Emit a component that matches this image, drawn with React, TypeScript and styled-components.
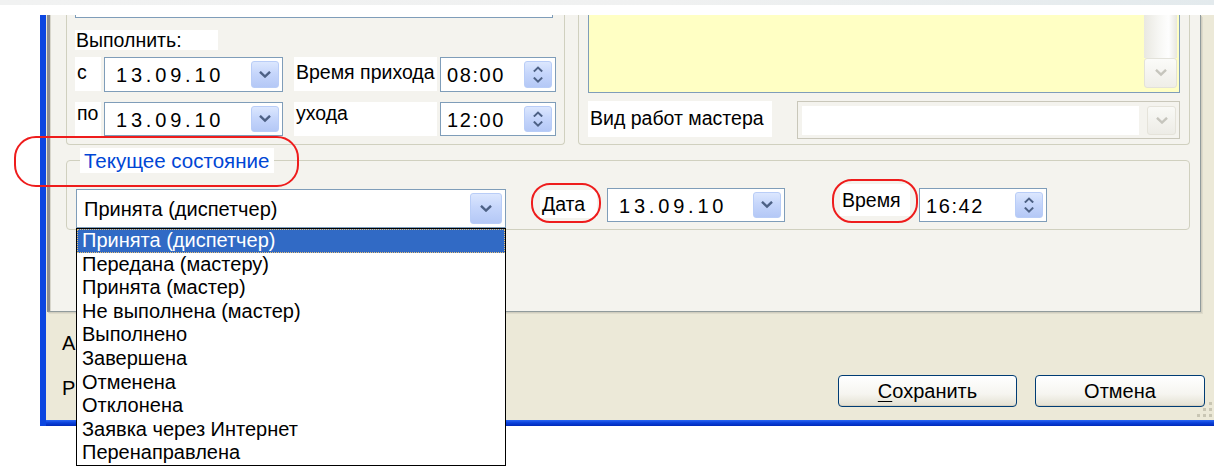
import React from "react";
import styled, { createGlobalStyle } from "styled-components";

const GlobalStyle = createGlobalStyle`
  html, body {
    margin: 0;
    padding: 0;
    background: #fff;
  }
`;

const xp = {
  beige: "#ece9d8",
  panel: "#f4f3ee",
  groupLine: "#d0d0bf",
  field: "#7f9db9",
  caption: "#0046d5",
  memo: "#ffffc4",
  selection: "#316ac5",
  mark: "#ee1c1c",
};

const statuses = [
  "Принята (диспетчер)",
  "Передана (мастеру)",
  "Принята (мастер)",
  "Не выполнена (мастер)",
  "Выполнено",
  "Завершена",
  "Отменена",
  "Отклонена",
  "Заявка через Интернет",
  "Перенаправлена",
];

type TextKind = "date" | "time" | "text";

const spacing: Record<TextKind, number> = { date: 3.8, time: 1.6, text: 0 };

const Chevron: React.FC<{ dir?: "up" | "down"; color: string; size?: number }> = ({
  dir = "down",
  color,
  size = 12,
}) => (
  <svg width={size} height={size * 0.62} viewBox="0 0 12 7.5">
    <path
      d={dir === "down" ? "M1.8 1.6 L6 5.6 L10.2 1.6" : "M1.8 5.9 L6 1.9 L10.2 5.9"}
      fill="none"
      stroke={color}
      strokeWidth="2.4"
      strokeLinecap="square"
    />
  </svg>
);

const SpinArrows: React.FC = () => (
  <SpinButton>
    <Chevron dir="up" color="#4d6185" size={10} />
    <Chevron color="#4d6185" size={10} />
  </SpinButton>
);

const App: React.FC = () => {
  return (
    <>
      <GlobalStyle />
      <Page>
        <TopStrip />
        <Window>
          <Panel>
            <TopRow>
              <LeftGroup>
                <InputStub />
                <Caption>Выполнить:</Caption>
                <FieldRow $top={7}>
                  <Label $w={26} $h={34} $pad={5}>с</Label>
                  <Field $w={179} $h={35} $left={3}>
                    <FieldText $pad={8} $kind="date">13.09.10</FieldText>
                    <ArrowButton><Chevron color="#4d6185" /></ArrowButton>
                  </Field>
                  <Label $w={143} $h={34} $pad={5} $left={11}>Время прихода</Label>
                  <Field $w={116} $h={35} $left={3}>
                    <FieldText $pad={3} $kind="time">08:00</FieldText>
                    <SpinArrows />
                  </Field>
                </FieldRow>
                <FieldRow $top={10}>
                  <Label $w={26} $h={34} $pad={1}>по</Label>
                  <Field $w={179} $h={34} $left={3}>
                    <FieldText $pad={8} $kind="date">13.09.10</FieldText>
                    <ArrowButton><Chevron color="#4d6185" /></ArrowButton>
                  </Field>
                  <Label $w={143} $h={34} $pad={1} $left={11}>ухода</Label>
                  <Field $w={116} $h={34} $left={3}>
                    <FieldText $pad={3} $kind="time">12:00</FieldText>
                    <SpinArrows />
                  </Field>
                </FieldRow>
              </LeftGroup>

              <RightGroup>
                <Memo>
                  <MemoScroll>
                    <ScrollTrack />
                    <ScrollArrow><Chevron color="#c6c5bd" /></ScrollArrow>
                  </MemoScroll>
                </Memo>
                <FieldRow $top={8}>
                  <Label $w={184} $h={36} $pad={7}>Вид работ мастера</Label>
                  <DisabledCombo>
                    <DisabledText />
                    <DisabledButton><Chevron color="#c6c5bd" /></DisabledButton>
                  </DisabledCombo>
                </FieldRow>
              </RightGroup>
            </TopRow>

            <StatusGroup>
              <StatusLegend>Текущее состояние</StatusLegend>
              <StatusRow>
                <ComboWrap>
                  <Field $w={430} $h={39} $top={5}>
                    <FieldText $pad={4} $kind="text">Принята (диспетчер)</FieldText>
                    <ArrowButton $wide><Chevron color="#4d6185" /></ArrowButton>
                  </Field>
                  <DropList>
                    {statuses.map((s, i) => (
                      <DropItem key={s} $selected={i === 0}>{s}</DropItem>
                    ))}
                  </DropList>
                </ComboWrap>
                <Label $w={57} $h={28} $pad={4} $left={34} $top={6}>Дата</Label>
                <Field $w={178} $h={34} $left={10} $top={4}>
                  <FieldText $pad={8} $kind="date">13.09.10</FieldText>
                  <ArrowButton><Chevron color="#4d6185" /></ArrowButton>
                </Field>
                <Label $w={70} $h={32} $pad={6} $left={55}>Время</Label>
                <Field $w={128} $h={34} $left={9} $top={4}>
                  <FieldText $pad={3} $kind="time">16:42</FieldText>
                  <SpinArrows />
                </Field>
              </StatusRow>
            </StatusGroup>
          </Panel>

          <Footer>
            <SideLabels>
              <SideLabel>А</SideLabel>
              <SideLabel>Р</SideLabel>
            </SideLabels>
            <Buttons>
              <DialogButton $w={179}>
                <u>С</u>охранить
              </DialogButton>
              <DialogButton $w={170}>Отмена</DialogButton>
            </Buttons>
            <Grip width="18" height="18" viewBox="0 0 18 18">
              {[
                [14, 2],
                [14, 8],
                [8, 8],
                [14, 14],
                [8, 14],
                [2, 14],
              ].map(([x, y]) => (
                <rect key={`${x}-${y}`} x={x} y={y} width="3" height="3" fill="#c9c6b4" />
              ))}
            </Grip>
          </Footer>
          <FrameBottom />
        </Window>

        {/* red marks drawn over the form */}
        <Mark style={{ left: 14, top: 136, width: 285, height: 51 }} $r={22} />
        <Mark style={{ left: 531, top: 183, width: 70, height: 40 }} $r={19} />
        <Mark style={{ left: 832, top: 179, width: 86, height: 44 }} $r={20} />
      </Page>
    </>
  );
};

const Page = styled.div`
  position: relative;
  width: 1214px;
  height: 469px;
  overflow: hidden;
  background: #fff;
  font-family: "Liberation Sans", Arial, sans-serif;
  color: #000;
`;

const TopStrip = styled.div`
  height: 5px;
  background: linear-gradient(90deg, #f1f2f2 0%, #f0f1f1 55%, #e3eaed 100%);
`;

const Window = styled.div`
  box-sizing: border-box;
  width: 1174px;
  height: 411px;
  margin: 10px 0 0 40px;
  border-left: 6px solid #0c46e0;
  background: ${xp.beige};
  display: flex;
  flex-direction: column;
`;

const Panel = styled.div`
  box-sizing: border-box;
  flex-shrink: 0;
  width: 1154px;
  height: 297px;
  margin-left: 1px;
  padding: 0 10px 0 16px;
  background: ${xp.panel};
  border-left: 3px solid #8e8e8e;
  border-right: 1px solid #919b9c;
  border-bottom: 1px solid #919b9c;
  box-shadow: inset 1px 0 0 #d8d6cc, 1px 1px 0 #d0cdbf, 2px 2px 0 #dedbcb;
`;

const TopRow = styled.div`
  display: flex;
  gap: 13px;
  height: 130px;
`;

const GroupBox = styled.div`
  box-sizing: border-box;
  height: 130px;
  border: 1px solid ${xp.groupLine};
  border-top: none;
  border-radius: 0 0 4px 4px;
`;

const LeftGroup = styled(GroupBox)`
  width: 499px;
  padding: 0 8px;
`;

const RightGroup = styled(GroupBox)`
  width: 612px;
  padding: 0 9px;
`;

const InputStub = styled.div`
  box-sizing: border-box;
  width: 478px;
  height: 3px;
  background: #fff;
  border: 1px solid ${xp.field};
  border-top: none;
`;

const Caption = styled.div`
  width: 143px;
  height: 20px;
  margin-top: 12px;
  padding-left: 1px;
  box-sizing: border-box;
  background: #fff;
  font-size: 19.5px;
  line-height: 20px;
`;

const FieldRow = styled.div<{ $top: number }>`
  display: flex;
  align-items: flex-start;
  margin-top: ${(p) => p.$top}px;
`;

const Label = styled.div<{ $w: number; $h: number; $pad: number; $left?: number; $top?: number }>`
  box-sizing: border-box;
  flex-shrink: 0;
  width: ${(p) => p.$w}px;
  height: ${(p) => p.$h}px;
  margin-left: ${(p) => p.$left ?? 0}px;
  margin-top: ${(p) => p.$top ?? 0}px;
  padding: ${(p) => p.$pad}px 0 0 2px;
  background: #fff;
  font-size: 19.5px;
  line-height: 20px;
  white-space: nowrap;
`;

const Field = styled.div<{ $w: number; $h: number; $left?: number; $top?: number }>`
  box-sizing: border-box;
  flex-shrink: 0;
  display: flex;
  width: ${(p) => p.$w}px;
  height: ${(p) => p.$h}px;
  margin-left: ${(p) => p.$left ?? 0}px;
  margin-top: ${(p) => p.$top ?? 0}px;
  padding: 3px;
  border: 1px solid ${xp.field};
  background: #fff;
`;

const FieldText = styled.div<{ $pad: number; $kind: TextKind }>`
  flex: 1;
  display: flex;
  align-items: center;
  padding: 2px 0 0 ${(p) => p.$pad}px;
  font-size: 20px;
  letter-spacing: ${(p) => spacing[p.$kind]}px;
  white-space: nowrap;
`;

const ArrowButton = styled.div<{ $wide?: boolean }>`
  box-sizing: border-box;
  width: ${(p) => (p.$wide ? 32 : 28)}px;
  display: flex;
  align-items: center;
  justify-content: center;
  border: 1px solid #b9cdf7;
  border-radius: 3px;
  background: linear-gradient(180deg, #dce7fe 0%, #c6d6fb 45%, #b4c8f6 100%);
`;

const SpinButton = styled(ArrowButton)`
  flex-direction: column;
  gap: 4px;
`;

const Memo = styled.div`
  box-sizing: border-box;
  display: flex;
  justify-content: flex-end;
  width: 592px;
  height: 78px;
  padding: 0 2px 4px 0;
  background: ${xp.memo};
  border: 1px solid ${xp.field};
  border-top: none;
`;

const MemoScroll = styled.div`
  width: 33px;
  display: flex;
  flex-direction: column;
`;

const ScrollTrack = styled.div`
  flex: 1;
  background: linear-gradient(90deg, #e9e8e1 0%, #f7f7f4 45%, #fefefe 75%, #e7e6df 100%);
`;

const ScrollArrow = styled.div`
  box-sizing: border-box;
  height: 30px;
  display: flex;
  align-items: center;
  justify-content: center;
  border: 1px solid #e3e2da;
  border-radius: 3px;
  background: linear-gradient(180deg, #fbfbf9 0%, #efeee8 100%);
`;

const DisabledCombo = styled.div`
  box-sizing: border-box;
  display: flex;
  width: 383px;
  height: 38px;
  margin-left: 25px;
  padding: 4px 3px 3px 4px;
  gap: 8px;
  border: 1px solid #c9c7ba;
  background: ${xp.panel};
`;

const DisabledText = styled.div`
  flex: 1;
  background: #fff;
`;

const DisabledButton = styled.div`
  box-sizing: border-box;
  width: 29px;
  display: flex;
  align-items: center;
  justify-content: center;
  border: 1px solid #e5e3da;
  border-radius: 3px;
  background: linear-gradient(180deg, #f9f9f6 0%, #edece6 100%);
`;

const StatusGroup = styled.fieldset`
  box-sizing: border-box;
  min-width: 0;
  width: 1124px;
  margin: 3px 0 0;
  padding: 0 8px 1px 9px;
  border: 1px solid ${xp.groupLine};
  border-radius: 4px;
`;

const StatusLegend = styled.legend`
  height: 25px;
  margin-left: 4px;
  padding: 0 5px 0 4px;
  background: #fff;
  color: ${xp.caption};
  font-size: 20.5px;
  line-height: 25px;
`;

const StatusRow = styled.div`
  display: flex;
  align-items: flex-start;
  margin-top: 11px;
`;

const ComboWrap = styled.div`
  position: relative;
`;

const DropList = styled.div`
  position: absolute;
  top: 100%;
  left: 0;
  z-index: 5;
  box-sizing: border-box;
  width: 430px;
  height: 238px;
  border: 1px solid #000;
  background: #fff;
`;

const DropItem = styled.div<{ $selected?: boolean }>`
  box-sizing: border-box;
  height: 23.6px;
  padding-left: 5px;
  font-size: 20px;
  line-height: 23px;
  white-space: nowrap;
  color: ${(p) => (p.$selected ? "#fff" : "#000")};
  background: ${(p) => (p.$selected ? xp.selection : "transparent")};
  outline: ${(p) => (p.$selected ? "1px dotted #e6c27a" : "none")};
  outline-offset: -1px;
`;

const Footer = styled.div`
  position: relative;
  flex: 1;
  display: flex;
  padding: 21px 9px 13px 16px;
`;

const SideLabels = styled.div`
  display: flex;
  flex-direction: column;
  gap: 25px;
`;

const SideLabel = styled.div`
  font-size: 20px;
  line-height: 20px;
  white-space: nowrap;
`;

const Buttons = styled.div`
  display: flex;
  gap: 18px;
  margin-left: auto;
  align-self: flex-end;
`;

const DialogButton = styled.button<{ $w: number }>`
  box-sizing: border-box;
  width: ${(p) => p.$w}px;
  height: 32px;
  padding: 0;
  border: 1px solid #003c74;
  border-radius: 4px;
  background: linear-gradient(180deg, #ffffff 0%, #f6f5f0 60%, #e3e0d2 100%);
  box-shadow: inset 0 -1px 0 #d6d0c0;
  font-family: "Liberation Sans", Arial, sans-serif;
  font-size: 20px;
  color: #000;

  u {
    text-decoration-thickness: 1px;
    text-underline-offset: 3px;
  }
`;

const Grip = styled.svg`
  position: absolute;
  right: 1px;
  bottom: 2px;
`;

const FrameBottom = styled.div`
  flex-shrink: 0;
  height: 6px;
  background: linear-gradient(180deg, #2c68f3 0%, #0b42dc 45%, #0029b8 100%);
`;

const Mark = styled.div<{ $r: number }>`
  position: absolute;
  box-sizing: border-box;
  border: 2px solid ${xp.mark};
  border-radius: ${(p) => p.$r}px;
  pointer-events: none;
`;

export default App;
